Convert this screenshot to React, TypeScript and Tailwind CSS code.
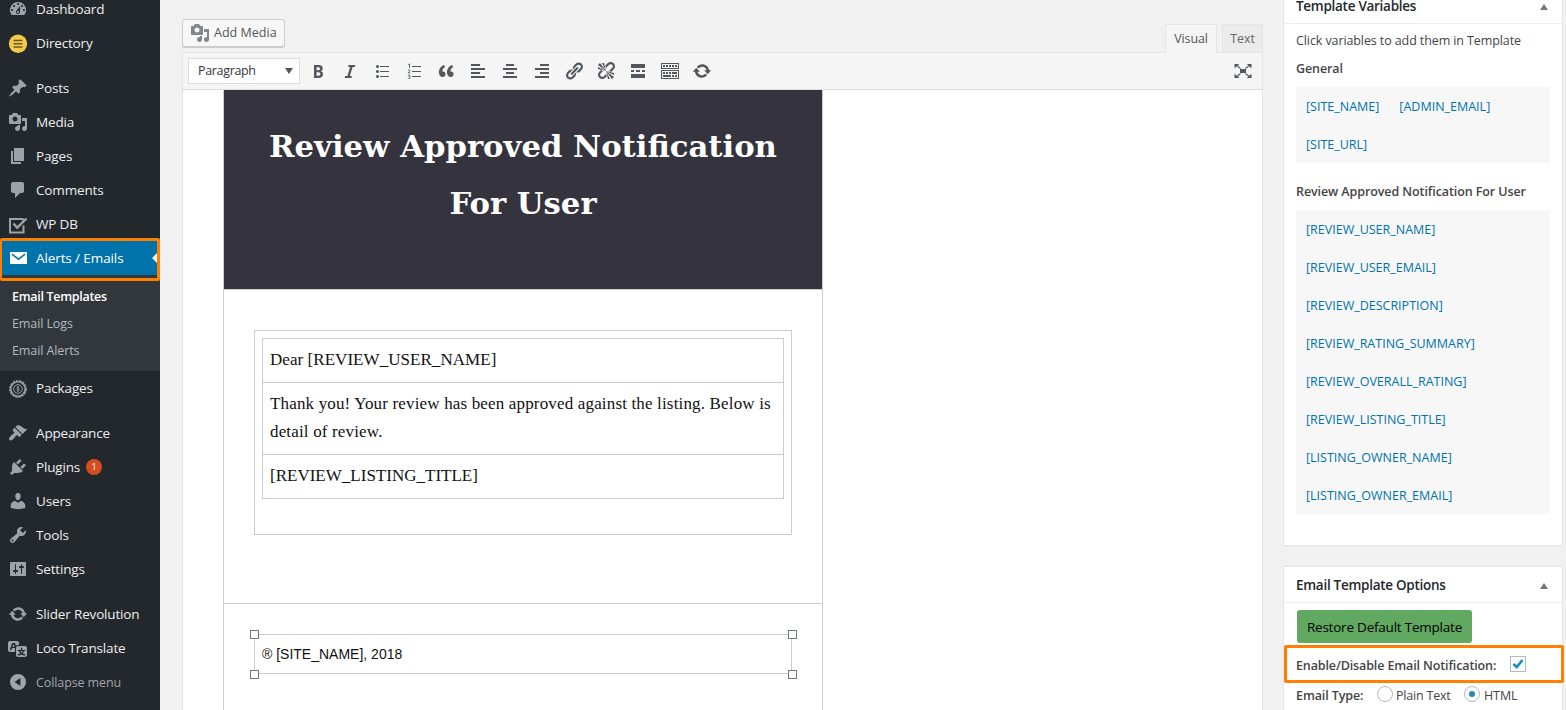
import type { ReactNode } from "react";

const PATHS = {
  dashboard:
    "M3.76 16h12.48A7.998 7.998 0 0 0 10 3a7.998 7.998 0 0 0-6.24 13zM10 4c.55 0 1 .45 1 1s-.45 1-1 1-1-.45-1-1 .45-1 1-1zM6 6c.55 0 1 .45 1 1s-.45 1-1 1-1-.45-1-1 .45-1 1-1zm8 0c.55 0 1 .45 1 1s-.45 1-1 1-1-.45-1-1 .45-1 1-1zm-5.37 5.55L12 7v6c0 1.1-.9 2-2 2s-2-.9-2-2c0-.57.24-1.08.63-1.45zM4 10c.55 0 1 .45 1 1s-.45 1-1 1-1-.45-1-1 .45-1 1-1zm12 0c.55 0 1 .45 1 1s-.45 1-1 1-1-.45-1-1 .45-1 1-1zm-5 3c0-.55-.45-1-1-1s-1 .45-1 1 .45 1 1 1 1-.45 1-1z",
  post: "M10.44 3.02l1.82-1.82 6.36 6.35-1.83 1.82c-1.05-.68-2.48-.57-3.41.36l-.75.75c-.92.93-1.04 2.35-.35 3.41l-1.83 1.82-2.41-2.41-2.8 2.79c-.42.42-3.38 2.71-3.8 2.29s1.86-3.39 2.28-3.81l2.79-2.79L4.1 9.36l1.83-1.82c1.05.69 2.48.57 3.4-.36l.75-.75c.93-.92 1.05-2.35.36-3.41z",
  media:
    "M13 11V4c0-.55-.45-1-1-1h-1.67L9 1H5L3.67 3H2c-.55 0-1 .45-1 1v7c0 .55.45 1 1 1h10c.55 0 1-.45 1-1zM7 4.5c1.38 0 2.5 1.12 2.5 2.5S8.38 9.5 7 9.5 4.5 8.38 4.5 7 5.62 4.5 7 4.5zM14 6h5v10.5c0 1.38-1.12 2.5-2.5 2.5S14 17.88 14 16.5s1.12-2.5 2.5-2.5c.17 0 .34.02.5.05V9h-3V6zm-4 8.05V13h2v3.5c0 1.38-1.12 2.5-2.5 2.5S7 17.88 7 16.5 8.12 14 9.5 14c.17 0 .34.02.5.05z",
  page: "M6 15V2h10v13H6zm-1 1h8v2H3V5h2v11z",
  comments: "M5 2h9c1.1 0 2 .9 2 2v7c0 1.1-.9 2-2 2h-2l-5 5v-5H5c-1.1 0-2-.9-2-2V4c0-1.1.9-2 2-2z",
  appearance:
    "M14.48 11.06L7.41 3.99l1.5-1.5c.5-.56 2.3-.47 3.51.32 1.21.8 1.43 1.28 2.91 2.1 1.18.64 2.45 1.26 4.45.85zm-.71.71L6.7 4.7 4.93 6.47c-.39.39-.39 1.02 0 1.41l1.06 1.06c.39.39.39 1.03 0 1.42-.6.6-1.43 1.11-2.21 1.69-.35.26-.7.53-1.01.84C1.43 14.23.4 16.08 1.4 17.07c.99 1 2.84-.03 4.18-1.36.31-.31.58-.66.85-1.02.57-.78 1.08-1.61 1.69-2.21.39-.39 1.02-.39 1.41 0l1.06 1.06c.39.39 1.02.39 1.41 0z",
  plugins:
    "M13.11 4.36L9.87 7.6 8 5.73l3.24-3.24c.35-.34 1.05-.2 1.56.32.52.51.66 1.21.31 1.55zm-8 1.77l.91-1.12 9.01 9.01-1.19.84c-.71.71-2.63 1.16-3.82 1.16H6.14L4.9 17.26c-.59.59-1.54.59-2.12 0-.59-.58-.59-1.53 0-2.12l1.24-1.24v-3.88c0-1.13.4-3.19 1.09-3.89zm7.26 3.97l3.24-3.24c.34-.35 1.04-.21 1.55.31.52.51.66 1.21.31 1.55l-3.24 3.25z",
  users:
    "M10 9.25c-2.27 0-2.73-3.44-2.73-3.44C7 4.02 7.82 2 9.97 2c2.16 0 2.98 2.02 2.71 3.81 0 0-.41 3.44-2.68 3.44zm0 2.57L12.72 10c2.39 0 4.52 2.33 4.52 4.53v2.49s-3.65 1.13-7.24 1.13c-3.65 0-7.24-1.13-7.24-1.13v-2.49c0-2.25 1.94-4.48 4.47-4.48z",
  tools:
    "M16.68 9.77c-1.34 1.34-3.3 1.67-4.95.99l-5.41 6.52c-.99.99-2.59.99-3.58 0s-.99-2.59 0-3.57l6.52-5.42c-.68-1.65-.35-3.61.99-4.95 1.28-1.28 3.12-1.62 4.72-1.06l-2.89 2.89 2.82 2.82 2.86-2.87c.53 1.58.18 3.39-1.08 4.65zM3.81 16.21c.4.39 1.04.39 1.43 0 .4-.4.4-1.04 0-1.43-.39-.4-1.03-.4-1.43 0-.39.39-.39 1.03 0 1.43z",
  settings:
    "M18 16V4c0-.55-.45-1-1-1H3c-.55 0-1 .45-1 1v12c0 .55.45 1 1 1h14c.55 0 1-.45 1-1zM8 11h1c.55 0 1 .45 1 1s-.45 1-1 1H8v1.5c0 .28-.22.5-.5.5s-.5-.22-.5-.5V13H6c-.55 0-1-.45-1-1s.45-1 1-1h1V5.5c0-.28.22-.5.5-.5s.5.22.5.5V11zm5-2h-1c-.55 0-1-.45-1-1s.45-1 1-1h1V5.5c0-.28.22-.5.5-.5s.5.22.5.5V7h1c.55 0 1 .45 1 1s-.45 1-1 1h-1v5.5c0 .28-.22.5-.5.5s-.5-.22-.5-.5V9z",
  update:
    "M10.2 3.28c3.53 0 6.43 2.61 6.92 6h2.08l-3.5 4-3.5-4h2.32c-.45-1.97-2.21-3.45-4.32-3.45-1.45 0-2.73.71-3.54 1.78L4.95 5.66C6.23 4.2 8.11 3.28 10.2 3.28zm-.4 13.44c-3.52 0-6.43-2.61-6.92-6H.8l3.5-4c1.17 1.33 2.33 2.67 3.5 4H5.48c.45 1.97 2.21 3.45 4.32 3.45 1.45 0 2.73-.71 3.54-1.78l1.71 1.95c-1.28 1.46-3.15 2.38-5.25 2.38z",
  translation:
    "M11 7H9.49c-.63 0-1.25.3-1.59.7L7 5H4.13l-2.39 7h1.69l.74-2H7v4H2c-1.1 0-2-.9-2-2V5c0-1.1.9-2 2-2h7c1.1 0 2 .9 2 2v2zM6.51 9H4.49l1-2.93zM10 8h7c1.1 0 2 .9 2 2v7c0 1.1-.9 2-2 2h-7c-1.1 0-2-.9-2-2v-7c0-1.1.9-2 2-2zm7.25 5v-1.08h-3.17V9.75h-1.16v2.17H9.75V13h1.28c.11.85.56 1.85 1.28 2.62-.87.36-1.89.62-2.31.62-.01.02.22.97.2 1.46.84 0 2.21-.5 3.28-1.15 1.09.65 2.48 1.15 3.34 1.15-.02-.49.2-1.44.2-1.46-.43 0-1.49-.27-2.38-.63.7-.77 1.14-1.77 1.25-2.61h1.36zm-3.81 1.93c-.5-.46-.85-1.13-1.01-1.93h2.09c-.17.8-.51 1.47-1 1.93l-.04.03s-.03-.02-.04-.03z",
  bold: "M6 4v13h4.54c1.37 0 2.46-.33 3.26-1 .8-.66 1.2-1.58 1.2-2.77 0-.84-.17-1.51-.51-2.01s-.9-.85-1.67-1.03v-.09c.57-.1 1.02-.4 1.36-.9s.51-1.13.51-1.91c0-1.14-.39-1.98-1.17-2.5C12.75 4.26 11.5 4 9.78 4H6zm2.57 5.15V6.26h1.36c.73 0 1.27.11 1.61.32.34.22.51.58.51 1.07 0 .54-.16.92-.47 1.15s-.82.35-1.51.35h-1.5zm0 2.19h1.6c1.44 0 2.16.53 2.16 1.61 0 .6-.17 1.05-.51 1.34s-.86.43-1.57.43H8.57v-3.38z",
  italic: "M14.78 6h-2.13l-2.8 9h2.12l-.62 2H4.6l.62-2h2.14l2.8-9H8.03l.62-2h6.75z",
  ul: "M5.5 7C4.67 7 4 6.33 4 5.5 4 4.68 4.67 4 5.5 4 6.32 4 7 4.68 7 5.5 7 6.33 6.32 7 5.5 7zM8 5h9v1H8V5zm-2.5 7c-.83 0-1.5-.67-1.5-1.5C4 9.68 4.67 9 5.5 9c.82 0 1.5.68 1.5 1.5 0 .83-.68 1.5-1.5 1.5zM8 10h9v1H8v-1zm-2.5 7c-.83 0-1.5-.67-1.5-1.5 0-.82.67-1.5 1.5-1.5.82 0 1.5.68 1.5 1.5 0 .83-.68 1.5-1.5 1.5zM8 15h9v1H8v-1z",
  quote:
    "M9.49 13.22c0-.74-.2-1.38-.61-1.9-.62-.78-1.83-.88-2.53-.72-.29-1.65 1.11-3.75 2.92-4.65L7.88 4c-2.73 1.3-5.42 4.28-4.96 8.05C3.21 14.43 4.59 16 6.54 16c.85 0 1.56-.25 2.12-.75s.83-1.18.83-2.03zm8.05 0c0-.74-.2-1.38-.61-1.9-.63-.78-1.83-.88-2.53-.72-.29-1.65 1.11-3.75 2.92-4.65L15.93 4c-2.73 1.3-5.41 4.28-4.95 8.05.29 2.38 1.66 3.95 3.61 3.95.85 0 1.56-.25 2.12-.75s.83-1.18.83-2.03z",
  alignLeft: "M12 5V3H3v2h9zm5 4V7H3v2h14zm-5 4v-2H3v2h9zm5 4v-2H3v2h14z",
  alignCenter: "M14 5V3H6v2h8zm3 4V7H3v2h14zm-3 4v-2H6v2h8zm3 4v-2H3v2h14z",
  alignRight: "M17 5V3H8v2h9zm0 4V7H3v2h14zm0 4v-2H8v2h9zm0 4v-2H3v2h14z",
  link: "M17.74 2.76c1.68 1.69 1.68 4.41 0 6.1l-1.53 1.52c-1.12 1.12-2.7 1.47-4.14 1.09l2.62-2.61.76-.77.76-.76c.84-.84.84-2.2 0-3.04-.84-.85-2.2-.85-3.04 0l-.77.76-3.38 3.38c-.37-1.44-.02-3.02 1.1-4.14l1.52-1.53c1.69-1.68 4.42-1.68 6.1 0zM8.59 13.43l5.34-5.34c.42-.42.42-1.1 0-1.52-.44-.43-1.13-.39-1.53 0l-5.33 5.34c-.42.42-.42 1.1 0 1.52.44.43 1.13.39 1.52 0zm-.76 2.29l4.14-4.15c.38 1.44.03 3.02-1.09 4.14l-1.52 1.53c-1.69 1.68-4.41 1.68-6.1 0-1.68-1.68-1.68-4.42 0-6.1l1.53-1.52c1.12-1.12 2.7-1.47 4.14-1.1l-4.14 4.15c-.85.84-.85 2.2 0 3.05.84.84 2.2.84 3.04 0z",
  unlink:
    "M17.74 2.26c1.68 1.69 1.68 4.41 0 6.1l-1.53 1.52c-.32.33-.69.58-1.08.77L13 10l1.69-1.64.76-.77.76-.76c.84-.84.84-2.2 0-3.04-.84-.85-2.2-.85-3.04 0l-.77.76-.76.76L10 7l-.65-2.14c.19-.38.44-.75.77-1.07l1.52-1.53c1.69-1.68 4.42-1.68 6.1 0zM2 4l8 6-6-8zm4-2l4 8-2-8H6zM2 6l8 4-8-2V6zm7.36 7.69L10 13l.74 2.35-1.38 1.39c-1.69 1.68-4.41 1.68-6.1 0-1.68-1.68-1.68-4.42 0-6.1l1.39-1.38L7 10l-.69.64-1.52 1.53c-.85.84-.85 2.2 0 3.04.84.85 2.2.85 3.04 0zM18 16l-8-6 6 8zm-4 2l-4-8 2 8h2zm4-4l-8-4 8 2v2z",
  more: "M17 7V3H3v4h14zM6 11V9H3v2h3zm6 0V9H8v2h4zm5 0V9h-3v2h3zm0 6v-4H3v4h14z",
  kitchen:
    "M19 2v6H1V2h18zm-1 5V3H2v4h16zM5 4v2H3V4h2zm3 0v2H6V4h2zm3 0v2H9V4h2zm3 0v2h-2V4h2zm3 0v2h-2V4h2zm2 5v9H1V9h18zm-1 8v-7H2v7h16zM5 11v2H3v-2h2zm3 0v2H6v-2h2zm3 0v2H9v-2h2zm6 0v2h-5v-2h5zm-6 3v2H3v-2h8zm3 0v2h-2v-2h2zm3 0v2h-2v-2h2z",
  collapse: "M10 2a8 8 0 1 0 0 16 8 8 0 0 0 0-16zm2.4 4v8L6.6 10z",
  arrowsOut:
    "M1.5 3h4.6L4.7 4.4l3.2 2.7-.8.9-3.2-2.8-2.4 2zM18.500 3h-4.6l1.400 1.400-3.200 2.700.8.900 3.200-2.800 2.400 2zM1.500 17h4.600l-1.400-1.400 3.200-2.700-.8-.9-3.200 2.800-2.400-2zM18.500 17h-4.600l1.400-1.400-3.200-2.700.8-.9 3.200 2.800 2.400-2zM7 8h6v4H7z",
};

type IconName = keyof typeof PATHS;

function Glyph({ name, className = "" }: { name: IconName; className?: string }) {
  return (
    <svg viewBox="0 0 20 20" className={`size-5 shrink-0 fill-current ${className}`}>
      <path fillRule="evenodd" d={PATHS[name]} />
    </svg>
  );
}

function DirectoryIcon() {
  return (
    <svg viewBox="0 0 20 20" className="size-5 shrink-0">
      <circle cx="10" cy="10.800" r="9.200" fill="#f5c94b" />
      <path d="M5.500 7.500h9M5.500 10.700h9M5.500 14h9" stroke="#6b5b27" strokeWidth="1.400" />
    </svg>
  );
}

function CheckBoxIcon() {
  return (
    <svg viewBox="0 0 20 20" className="mt-px size-5 shrink-0" fill="none" stroke="currentColor">
      <path d="M15.500 10.500V17.500h-13.500V4h13.500" strokeWidth="2" />
      <path d="M15.500 4v3" strokeWidth="2" />
      <path d="M5.500 8.500l3.700 4.200L18.500 3.500" strokeWidth="2.400" />
    </svg>
  );
}

function MailIcon() {
  return (
    <svg viewBox="0 0 20 20" className="size-5 shrink-0">
      <rect x="2" y="4" width="17" height="12" rx="0.600" fill="#fff" />
      <path d="M4 6.200l6.500 5 6.500-5" fill="none" stroke="#0073aa" strokeWidth="1.500" />
    </svg>
  );
}

function BadgeIcon() {
  return (
    <svg viewBox="0 0 20 20" className="mt-px size-5 shrink-0" fill="none" stroke="currentColor">
      <circle cx="10" cy="10" r="8" strokeWidth="1.600" strokeDasharray="2.600 .6" />
      <circle cx="10" cy="10" r="7" strokeWidth="1.200" />
      <circle cx="10" cy="10" r="4.300" strokeWidth="1" />
      <path d="M11.400 8.600c-.4-.7-2.600-.9-2.700.3 0 1.300 2.700.7 2.700 2.100 0 1.300-2.400 1.200-2.900.2M10 7.200v5.600" strokeWidth=".8" />
    </svg>
  );
}

function NumberedListIcon() {
  return (
    <svg viewBox="0 0 20 20" className="size-5 shrink-0 fill-current">
      <path d="M8 5h9v1H8zM8 10h9v1H8zM8 15h9v1H8z" />
      <path
        d="M4.300 3.700l1.200-.8v4M4 9.200c.5-.8 2-.6 2 .4 0 .8-1.500 1.300-2 2.200h2.300M4 14.300c.6-.5 2-.4 2 .5 0 .7-.7.800-1.200.8.700 0 1.400.2 1.400 1 0 1-1.600 1.100-2.300.6"
        fill="none"
        stroke="currentColor"
        strokeWidth=".9"
      />
    </svg>
  );
}

function MenuItem({ icon, label, children }: { icon: ReactNode; label: string; children?: ReactNode }) {
  return (
    <li className="flex h-[34px] items-center gap-2 pl-2 text-[#9ea3a8]">
      {icon}
      <span className="text-[13.5px] tracking-[-0.16px] text-[#eee]">{label}</span>
      {children}
    </li>
  );
}

function Sidebar() {
  return (
    <nav className="h-full w-40 shrink-0 overflow-hidden bg-[#23282d]">
      <ul className="-mt-2">
        <MenuItem icon={<Glyph name="dashboard" />} label="Dashboard" />
        <MenuItem icon={<DirectoryIcon />} label="Directory" />
        <li className="h-[11px]" />
        <MenuItem icon={<Glyph name="post" />} label="Posts" />
        <MenuItem icon={<Glyph name="media" />} label="Media" />
        <MenuItem icon={<Glyph name="page" />} label="Pages" />
        <MenuItem icon={<Glyph name="comments" />} label="Comments" />
        <MenuItem icon={<CheckBoxIcon />} label="WP DB" />
        <li className="relative">
          <div className="flex h-[34px] items-center gap-2 bg-[#0073aa] pl-2">
            <MailIcon />
            <span className="text-[13.5px] tracking-[-0.1px] text-white">Alerts / Emails</span>
            <span className="ml-auto border-y-8 border-r-8 border-y-transparent border-r-[#f1f1f1]" />
          </div>
          <ul className="flex h-24 flex-col bg-[#32373c] pt-2 text-[12.5px] leading-[27px] text-[#b4b9be]">
            <li className="pl-3 font-semibold tracking-[-0.3px] text-white">Email Templates</li>
            <li className="pl-3 tracking-[-0.1px]">Email Logs</li>
            <li className="pl-3 tracking-[-0.1px]">Email Alerts</li>
          </ul>
          <div className="absolute -top-[3px] left-0 h-[43px] w-40 rounded-[2px] border-[3px] border-l-2 border-[#ff8000]" />
        </li>
        <MenuItem icon={<BadgeIcon />} label="Packages" />
        <li className="h-[11px]" />
        <MenuItem icon={<Glyph name="appearance" />} label="Appearance" />
        <MenuItem icon={<Glyph name="plugins" />} label="Plugins">
          <span className="-ml-[2px] flex size-4 items-center justify-center rounded-full bg-[#d54e21] text-[9px] text-white">
            1
          </span>
        </MenuItem>
        <MenuItem icon={<Glyph name="users" />} label="Users" />
        <MenuItem icon={<Glyph name="tools" />} label="Tools" />
        <MenuItem icon={<Glyph name="settings" />} label="Settings" />
        <li className="h-[11px]" />
        <MenuItem icon={<Glyph name="update" />} label="Slider Revolution" />
        <MenuItem icon={<Glyph name="translation" />} label="Loco Translate" />
        <li className="flex h-[34px] items-center gap-2 pl-2 text-[#a0a5aa]">
          <Glyph name="collapse" />
          <span className="pt-[2px] text-[12.5px] tracking-[-0.1px]">Collapse menu</span>
        </li>
      </ul>
    </nav>
  );
}

const TOOLS: (IconName | "ol")[] = [
  "bold", "italic", "ul", "ol", "quote", "alignLeft", "alignCenter", "alignRight", "link", "unlink", "more", "kitchen", "update",
];

function EmailDocument() {
  return (
    <div className="ml-10 h-full w-[600px] border-x border-[#ccc]">
      <div className="flex h-[199px] justify-center bg-[#34333e] pt-[28px] text-center">
        <h1 className="font-['DejaVu_Serif',serif] text-[30.7px] leading-[57px] font-bold whitespace-nowrap text-white">
          Review Approved Notification
          <br />
          For User
        </h1>
      </div>
      <div className="h-[315px] border-y border-[#ccc] px-[30px] pt-10">
        <div className="h-[205px] border border-[#ccc] p-[7px] font-['Liberation_Serif',serif] text-[17px] leading-7 tracking-[0.16px] text-[#111]">
          <div className="h-[161px] border border-[#ccc]">
            <p className="h-[43px] px-[7px] pt-[7px] tracking-[0.05px]">Dear [REVIEW_USER_NAME]</p>
            <p className="h-[73px] border-y border-[#ccc] px-[7px] pt-[7px]">
              <span className="whitespace-nowrap">
                Thank you! Your review has been approved against the listing. Below is
              </span>
              <br />
              detail of review.
            </p>
            <p className="px-[7px] pt-[7px] tracking-[0.01px]">[REVIEW_LISTING_TITLE]</p>
          </div>
        </div>
      </div>
      <div className="px-[30px] pt-[30px]">
        <div className="relative flex h-10 items-center border border-[#ccc] px-[7px] font-['Liberation_Sans',sans-serif] text-sm text-[#111]">
          ® [SITE_NAME], 2018
          <i className="absolute -top-[5px] -left-[5px] size-[9px] border border-[#72777c] bg-white" />
          <i className="absolute -top-[5px] -right-[6px] size-[9px] border border-[#72777c] bg-white" />
          <i className="absolute -bottom-[6px] -left-[5px] size-[9px] border border-[#72777c] bg-white" />
          <i className="absolute -right-[6px] -bottom-[6px] size-[9px] border border-[#72777c] bg-white" />
        </div>
      </div>
    </div>
  );
}

function Editor() {
  return (
    <section className="ml-[22px] flex h-full w-[1081px] shrink-0 flex-col">
      <div className="flex h-[52px] items-end">
        <button className="mb-[5px] flex h-[28px] w-[103px] items-center gap-1 rounded-[3px] border border-[#ccc] bg-[#f7f7f7] pl-[7px] text-[12.5px] tracking-[0.02px] whitespace-nowrap text-[#555] shadow-[0_1px_0_#ccc]">
          <Glyph name="media" className="text-[#82878c]" />
          <span className="pt-px">Add Media</span>
        </button>
        <div className="relative z-10 -mb-px ml-auto flex h-[29px] gap-[5px] text-[12.5px] tracking-[-0.1px]">
          <span className="flex w-[52px] justify-center border border-b-0 border-[#e5e5e5] bg-[#f5f5f5] pt-[5px] text-[#555]">
            Visual
          </span>
          <span className="mb-px flex w-[41px] justify-center border border-b-0 border-[#e5e5e5] bg-[#ebebeb] pt-[5px] text-[#666]">
            Text
          </span>
        </div>
      </div>
      <div className="flex min-h-0 flex-1 flex-col border border-b-0 border-[#e5e5e5] bg-white">
        <div className="flex h-[37px] shrink-0 items-center border-b border-[#ddd] bg-[#f5f5f5] pr-[9px] pl-[5px] text-[#50575e]">
          <div className="flex h-[26px] w-28 items-center justify-between border border-[#ddd] bg-white pr-[6px] pl-[9px] text-[12.5px] tracking-[-0.33px] text-[#32373c]">
            Paragraph
            <span className="border-x-[4.5px] border-t-[6px] border-x-transparent border-t-[#50575e]" />
          </div>
          <div className="ml-2 flex gap-3">
            {TOOLS.map((t) => (t === "ol" ? <NumberedListIcon key={t} /> : <Glyph key={t} name={t} />))}
          </div>
          <Glyph name="arrowsOut" className="ml-auto" />
        </div>
        <div className="min-h-0 flex-1 overflow-hidden">
          <EmailDocument />
        </div>
      </div>
    </section>
  );
}

function PanelHeader({ title }: { title: string }) {
  return (
    <header className="flex h-9 items-center justify-between border-b border-[#eee] pr-[14px] pl-3">
      <h2 className="text-[13.5px] font-semibold tracking-[-0.28px] text-[#23282d]">{title}</h2>
      <span className="mt-[2px] border-x-4 border-b-[6px] border-x-transparent border-b-[#72777c]" />
    </header>
  );
}

function Variable({ name }: { name: string }) {
  return <a className="h-[38px] pr-5 leading-[40px] text-[#0073aa]">{name}</a>;
}

const REVIEW_VARIABLES = [
  "[REVIEW_USER_NAME]",
  "[REVIEW_USER_EMAIL]",
  "[REVIEW_DESCRIPTION]",
  "[REVIEW_RATING_SUMMARY]",
  "[REVIEW_OVERALL_RATING]",
  "[REVIEW_LISTING_TITLE]",
  "[LISTING_OWNER_NAME]",
  "[LISTING_OWNER_EMAIL]",
];

function OptionsColumn() {
  return (
    <aside className="ml-5 w-[280px] shrink-0 text-[12.5px] leading-5 tracking-[-0.1px] text-[#444]">
      <section className="-mt-[13px] h-[559px] border border-[#e5e5e5] bg-white">
        <PanelHeader title="Template Variables" />
        <div className="px-3 pt-[7px]">
          <p>Click variables to add them in Template</p>
          <h3 className="mt-2 font-semibold tracking-[-0.1px]">General</h3>
          <div className="mt-[8px] flex flex-wrap bg-[#f7f7f7] pl-[10px] tracking-normal">
            <Variable name="[SITE_NAME]" />
            <Variable name="[ADMIN_EMAIL]" />
            <Variable name="[SITE_URL]" />
          </div>
          <h3 className="mt-[19px] font-semibold tracking-[-0.09px] whitespace-nowrap">
            Review Approved Notification For User
          </h3>
          <div className="mt-2 flex flex-col bg-[#f7f7f7] pl-[10px] tracking-normal">
            {REVIEW_VARIABLES.map((v) => (
              <Variable key={v} name={v} />
            ))}
          </div>
        </div>
      </section>
      <section className="mt-5 h-[200px] border border-[#e5e5e5] bg-white">
        <PanelHeader title="Email Template Options" />
        <button className="mt-[7px] ml-[13px] h-[33px] w-[175px] rounded-[3px] bg-[#61a961] text-[13.5px] tracking-[-0.22px] whitespace-nowrap text-black">
          Restore Default Template
        </button>
        <div className="relative mt-[2px] flex h-[38px] items-center pl-3">
          <div className="absolute inset-y-0 -right-[2px] left-0 rounded-[2px] border-[3px] border-[#ff8000]" />
          <span className="mt-[3px] w-[200px] font-semibold tracking-[-0.12px] whitespace-nowrap">
            Enable/Disable Email Notification:
          </span>
          <span className="ml-[14px] flex size-4 items-center justify-center border border-[#b4b9be] bg-white">
            <svg viewBox="0 0 14 14" className="size-[14px]" fill="none" stroke="#1e8cbe" strokeWidth="2.600">
              <path d="M2.500 7l3.200 3L11.500 3" />
            </svg>
          </span>
        </div>
        <div className="flex h-6 items-center pl-3">
          <span className="w-[67px] pt-[2px] font-semibold whitespace-nowrap">Email Type:</span>
          <span className="-mt-[2px] ml-[14px] size-4 rounded-full border border-[#b4b9be] bg-white" />
          <span className="ml-[3px] w-[54px] pt-[2px] tracking-[-0.2px] whitespace-nowrap">Plain Text</span>
          <span className="-mt-[2px] ml-[14px] flex size-4 items-center justify-center rounded-full border border-[#b4b9be] bg-white">
            <i className="size-[6px] rounded-full bg-[#1e8cbe]" />
          </span>
          <span className="ml-[4px] pt-[2px]">HTML</span>
        </div>
      </section>
    </aside>
  );
}

export default function App() {
  return (
    <div className="flex h-[710px] w-[1566px] overflow-hidden bg-[#f1f1f1] font-['Open_Sans','Noto_Sans',sans-serif]">
      <Sidebar />
      <Editor />
      <OptionsColumn />
    </div>
  );
}
